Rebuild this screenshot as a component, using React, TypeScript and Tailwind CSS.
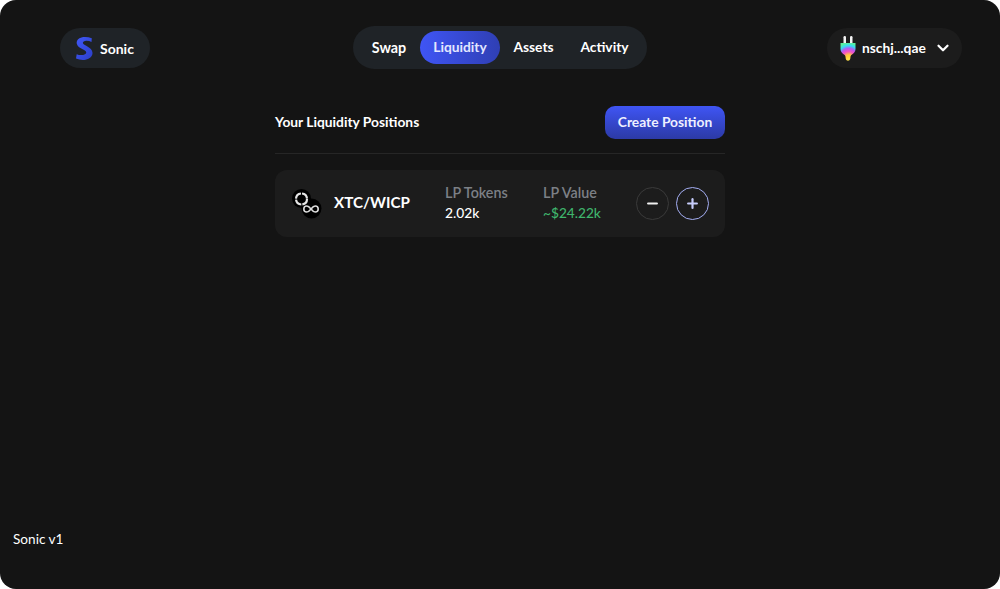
import React from "react";
import { ChevronDown, Minus, Plus } from "lucide-react";

function SonicLogo() {
  return (
    <svg width="17" height="23" viewBox="0 0 17 23">
      <defs>
        <linearGradient id="sg" x1="0" y1="0" x2="1" y2="1">
          <stop offset="0" stopColor="#4058f8" />
          <stop offset="1" stopColor="#2c3fc8" />
        </linearGradient>
      </defs>
      <path
        d="M15.800 1.200C12.500.1 8.500-.3 5.500.5 1.800 1.500.2 4 .8 6.700c.6 2.600 3 4.100 5.400 5.300 2 1 3.800 1.900 4 3.300.2 1.300-.9 2.400-3.100 2.700-2.300.3-4.500 0-6.400-.8L0 21.500c3 1.300 6.500 1.800 9.500 1.200 4.600-.9 7.200-3.700 7-7-.2-3-2.500-4.800-5.100-6.200-2.100-1.100-4.300-2-4.500-3.400-.1-1 .7-1.800 2.200-2.100 2-.4 4.500 0 6.400.9z"
        fill="url(#sg)"
      />
    </svg>
  );
}

function PlugLogo() {
  return (
    <svg width="16" height="25" viewBox="0 0 16 25">
      <defs>
        <radialGradient id="pg" cx="0.55" cy="0.95" r="0.95">
          <stop offset="0" stopColor="#ffe94a" />
          <stop offset="0.3" stopColor="#ffc93a" />
          <stop offset="0.5" stopColor="#f452c8" />
          <stop offset="0.68" stopColor="#b45cf0" />
          <stop offset="0.85" stopColor="#35dcf5" />
          <stop offset="1" stopColor="#58f0a0" />
        </radialGradient>
      </defs>
      <rect x="3.500" y="0" width="2.500" height="8" rx="1.200" fill="#f4f4f4" />
      <rect x="10" y="0" width="2.500" height="8" rx="1.200" fill="#f4f4f4" />
      <path
        d="M.5 7h15v6c0 2.800-2 4.600-3.800 5.800-1 .7-1.200 1.500-1.300 3-.1 1.700-1 3-2.400 3s-2.300-1.300-2.400-3c-.1-1.500-.3-2.300-1.300-3C2.500 17.600.5 15.800.5 13z"
        fill="url(#pg)"
      />
    </svg>
  );
}

function PairIcon() {
  return (
    <svg width="30" height="30" viewBox="0 0 30 30" className="shrink-0">
      <circle cx="9.500" cy="9.500" r="9.500" fill="#000" />
      <circle cx="19.500" cy="19.500" r="10" fill="#000" />
      <circle cx="9.500" cy="10" r="5.500" fill="none" stroke="#e6e6e6" strokeWidth="2.200" strokeDasharray="7.500 1.100" />
      <path
        d="M19 20c-1.400-1.800-2.700-3-4.200-3a3 3 0 0 0 0 6c1.500 0 2.800-1.200 4.200-3 1.400-1.800 2.700-3 4.200-3a3 3 0 0 1 0 6c-1.500 0-2.800-1.200-4.200-3z"
        fill="none"
        stroke="#dcdcdc"
        strokeWidth="1.600"
      />
    </svg>
  );
}

export default function App() {
  return (
    <div className="h-[589px] w-[1000px] bg-white font-['Lato','Open_Sans',sans-serif]">
      <div className="relative flex h-full w-full flex-col rounded-[16px] bg-[#141414] text-white">
        <header className="flex h-[96px] shrink-0 items-start pt-[26px]">
          <div className="w-[353px] pl-[60px] pt-[2px]">
            <div className="flex h-[40px] w-[90px] items-center gap-[7px] rounded-full bg-[#1f2327] pl-[16px]">
              <SonicLogo />
              <span className="text-[14px] font-bold">Sonic</span>
            </div>
          </div>
          <nav className="flex h-[43px] w-[294px] items-center rounded-[22px] bg-[#1f2327] pl-[5px] text-[13.800px] font-bold">
            <span className="w-[62px] text-center text-[14.300px]">Swap</span>
            <span className="flex h-[33px] w-[80px] items-center justify-center rounded-[17px] bg-gradient-to-r from-[#3f55f5] to-[#2f3fb4] text-[#e3e6ff]">
              Liquidity
            </span>
            <span className="w-[67px] text-center">Assets</span>
            <span className="w-[74px] pl-[1px] text-center">Activity</span>
          </nav>
          <div className="flex flex-1 justify-end pr-[38px] pt-[2px]">
            <div className="flex h-[40px] w-[135px] items-center rounded-full bg-[#1c1c1c] pl-[13px]">
              <PlugLogo />
              <span className="ml-[6px] text-[13.800px] font-bold">nschj...qae</span>
              <ChevronDown className="ml-[8px] h-[18px] w-[18px]" strokeWidth={3} />
            </div>
          </div>
        </header>

        <main className="mx-auto flex w-[450px] flex-col">
          <div className="mt-[10px] flex h-[33px] items-center justify-between">
            <h2 className="text-[13.800px] font-bold">Your Liquidity Positions</h2>
            <button className="flex h-[33px] w-[120px] items-center justify-center rounded-[10px] bg-gradient-to-b from-[#3f55f5] to-[#2c3aa6] text-[13.800px] font-bold text-[#eef0ff]">
              Create Position
            </button>
          </div>
          <div className="mt-[14px] h-px bg-[#262626]" />
          <div className="mt-[16px] flex h-[67px] items-center rounded-[12px] bg-[#1c1c1c] pl-[17px]">
            <PairIcon />
            <span className="mb-[3px] ml-[12px] w-[111px] text-[15.200px] font-bold">XTC/WICP</span>
            <div className="mb-[1px] flex w-[98px] flex-col text-[14.300px] font-medium leading-[20px]">
              <span className="font-semibold text-[#7c8086]">LP Tokens</span>
              <span className="text-[13.800px]">2.02k</span>
            </div>
            <div className="mb-[1px] flex w-[93px] flex-col text-[14.300px] font-medium leading-[20px]">
              <span className="font-semibold text-[#7c8086]">LP Value</span>
              <span className="text-[13.700px] text-[#3fb56c]">~$24.22k</span>
            </div>
            <div className="flex gap-[7px]">
              <button className="flex h-[33px] w-[33px] items-center justify-center rounded-full border border-[#3a3a3a] text-[#f0f0f0]">
                <Minus className="h-[15px] w-[15px]" strokeWidth={3.500} />
              </button>
              <button className="flex h-[33px] w-[33px] items-center justify-center rounded-full border border-[#a3adf2] text-[#c6ccfa]">
                <Plus className="h-[15px] w-[15px]" strokeWidth={3.500} />
              </button>
            </div>
          </div>
        </main>

        <div className="mt-auto pb-[41px] pl-[13px] text-[13.600px] leading-[18px]">Sonic v1</div>
      </div>
    </div>
  );
}
